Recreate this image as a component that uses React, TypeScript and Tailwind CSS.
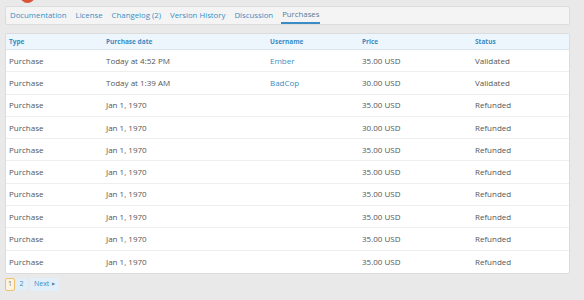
import React from "react";

const rows = [
  ["Purchase", "Today at 4:52 PM", "Ember", "35.00 USD", "Validated"],
  ["Purchase", "Today at 1:39 AM", "BadCop", "30.00 USD", "Validated"],
  ["Purchase", "Jan 1, 1970", "", "35.00 USD", "Refunded"],
  ["Purchase", "Jan 1, 1970", "", "30.00 USD", "Refunded"],
  ["Purchase", "Jan 1, 1970", "", "35.00 USD", "Refunded"],
  ["Purchase", "Jan 1, 1970", "", "35.00 USD", "Refunded"],
  ["Purchase", "Jan 1, 1970", "", "35.00 USD", "Refunded"],
  ["Purchase", "Jan 1, 1970", "", "35.00 USD", "Refunded"],
  ["Purchase", "Jan 1, 1970", "", "35.00 USD", "Refunded"],
  ["Purchase", "Jan 1, 1970", "", "35.00 USD", "Refunded"],
];

const tabs = ["Documentation", "License", "Changelog (2)", "Version History", "Discussion", "Purchases"];

const cols = "grid grid-cols-[97px_164px_92px_113px_1fr]";

export default function App() {
  return (
    <div className="w-[584px] h-[300px] bg-[#e9e9e9] overflow-hidden relative" style={{ fontFamily: '"Open Sans", "Noto Sans", sans-serif' }}>
      <div className="absolute left-[20px] top-[-12px] w-[15px] h-[15px] rounded-full bg-[#d9523a]" />
      <div className="pt-[6px] pl-[5px] pr-[14px]">
        <div className="h-[19px] bg-[#f4f4f4] border border-[#dcdcdc] rounded-[2px] flex items-stretch pl-[3px] gap-[7px] text-[7.8px] text-[#3a8dc4]">
          {tabs.map((t) => (
            <div key={t} className={"px-[1px] flex items-center " + (t === "Purchases" ? "border-b-2 border-[#3a8dc4] text-[#5b7a94]" : "")}>
              {t}
            </div>
          ))}
        </div>
        <div className="mt-[8px] bg-white border border-[#dcdcdc] rounded-[2px]">
          <div className={cols + " h-[16px] items-center bg-[#eef6fd] border-b border-[#dbe6ef] text-[6.5px] font-bold text-[#3a8dc4] pl-[3px]"}>
            <div>Type</div>
            <div>Purchase date</div>
            <div>Username</div>
            <div>Price</div>
            <div>Status</div>
          </div>
          {rows.map((r, i) => (
            <div key={i} className={cols + " h-[22.3px] items-center pl-[3px] text-[8px] text-[#555] " + (i < rows.length - 1 ? "border-b border-[#eeeeee]" : "")}>
              <div>{r[0]}</div>
              <div>{r[1]}</div>
              <div className="text-[#3a8dc4]">{r[2]}</div>
              <div>{r[3]}</div>
              <div>{r[4]}</div>
            </div>
          ))}
        </div>
        <div className="mt-[4px] flex items-center gap-[1px] text-[7px] h-[13px]">
          <div className="h-full w-[10px] flex items-center justify-center border border-[#f0c070] bg-[#fdf3de] text-[#8a7a5a] rounded-[2px]">1</div>
          <div className="h-full w-[11px] flex items-center justify-center bg-[#e2eef8] text-[#3a8dc4] rounded-[2px]">2</div>
          <div className="h-full ml-[2px] px-[4px] flex items-center gap-[3px] bg-[#e2eef8] text-[#3a8dc4] rounded-[2px]">
            Next <span className="text-[4px] text-[#5b7a94]">▶</span>
          </div>
        </div>
      </div>
    </div>
  );
}
